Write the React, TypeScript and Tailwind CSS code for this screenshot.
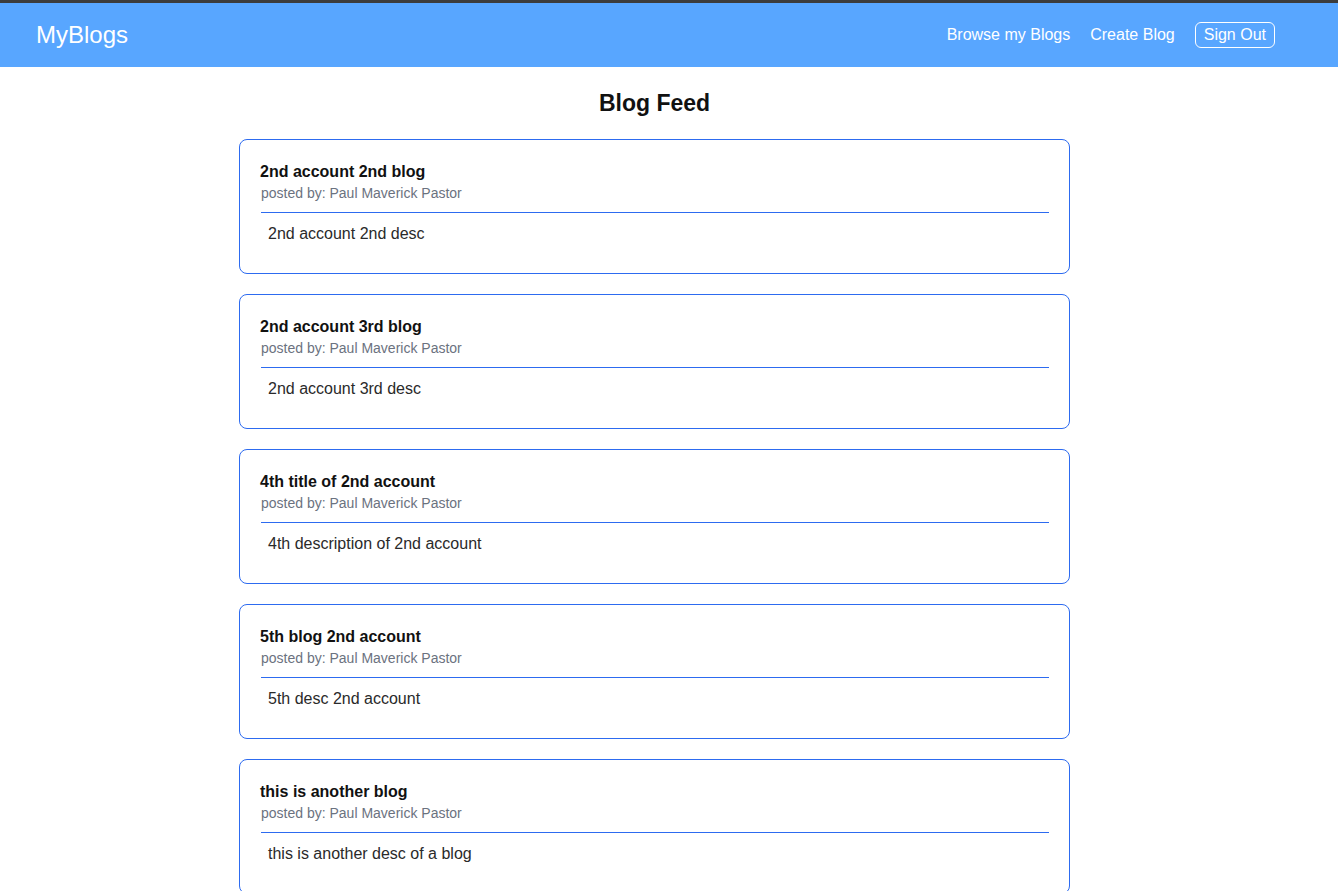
import React from 'react';

const blogs = [
  { title: '2nd account 2nd blog', desc: '2nd account 2nd desc' },
  { title: '2nd account 3rd blog', desc: '2nd account 3rd desc' },
  { title: '4th title of 2nd account', desc: '4th description of 2nd account' },
  { title: '5th blog 2nd account', desc: '5th desc 2nd account' },
  { title: 'this is another blog', desc: 'this is another desc of a blog' },
];

export default function App() {
  return (
    <div className="min-h-screen bg-white font-['Liberation_Sans',Arial,sans-serif]">
      <div className="h-[3px] bg-[#3c3c3c]" />
      <nav className="h-16 bg-[#58a6ff] flex items-center justify-between pl-9 pr-[63px]">
        <div className="text-[24px] text-white">MyBlogs</div>
        <div className="flex items-center gap-5 text-[16px] text-white">
          <span>Browse my Blogs</span>
          <span>Create Blog</span>
          <button className="h-[26px] px-2 border border-white rounded-md leading-none">Sign Out</button>
        </div>
      </nav>

      <main className="ml-[239px] w-[831px] pb-10">
        <h1 className="text-center text-[23px] font-bold text-[#111] mt-[23px] mb-[23px] leading-[26px]">Blog Feed</h1>
        <div className="flex flex-col gap-5">
          {blogs.map((b, i) => (
            <div key={i} className="border border-[#2d6bf0] rounded-lg px-5 pt-[21px] pb-[28px]">
              <div className="text-[16px] font-bold text-[#111] leading-[22px]">{b.title}</div>
              <div className="text-[14px] text-[#6b7280] leading-5 pl-px">posted by: Paul Maverick Pastor</div>
              <div className="h-px bg-[#2d6bf0] mt-[9px] ml-px" />
              <div className="text-[16px] text-[#2a2a2a] leading-[22px] mt-[10px] pl-[8px]">{b.desc}</div>
            </div>
          ))}
        </div>
      </main>
    </div>
  );
}
